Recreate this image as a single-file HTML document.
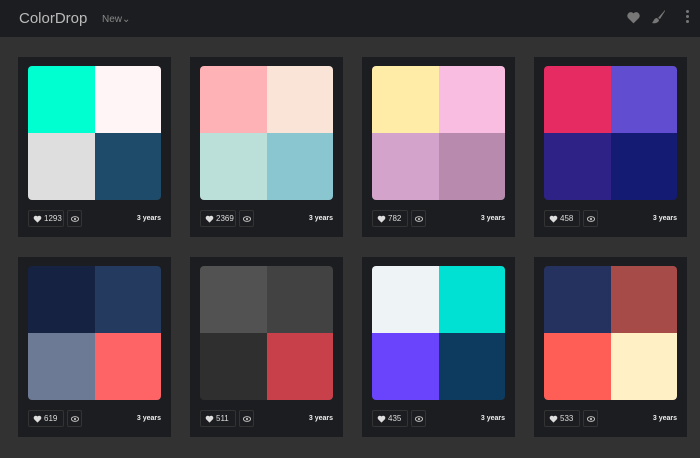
<!DOCTYPE html>
<html><head><style>
*{margin:0;padding:0;box-sizing:border-box}
body{width:700px;height:458px;overflow:hidden;background:#323232;font-family:"Liberation Sans",sans-serif}
.hdr{position:absolute;left:0;top:0;width:700px;height:37px;background:#1c1d20}
.logo{position:absolute;left:19px;top:10px;color:#bbb;font-size:15px}
.new{position:absolute;left:102px;top:14px;color:#888;font-size:10px}
.card{position:absolute;width:153px;height:180px;background:#1c1d20}
.pal{position:absolute;left:10px;top:9px;width:133px;height:134px;border-radius:4px;overflow:hidden;display:grid;grid-template-columns:1fr 1fr;grid-template-rows:1fr 1fr}
.b1{position:absolute;left:10px;top:153px;width:36px;height:17px;border:1px solid #333;border-radius:2px;color:#ddd;font-size:8px;line-height:15px;padding-left:15px}
.b1 svg{position:absolute;left:4px;top:4px}
.b2{position:absolute;left:49px;top:153px;width:15px;height:17px;border:1px solid #333;border-radius:2px}
.b2 svg{position:absolute;left:3px;top:5px}
.yr{position:absolute;right:10px;top:158px;color:#eee;font-size:7px;font-weight:bold}
</style></head><body>
<div class="hdr">
<div class="logo">ColorDrop</div>
<div class="new">New⌄</div>
<svg style="position:absolute;left:626px;top:11px" width="15" height="13" viewBox="0 0 24 22"><path d="M12 21 L3 12 A5.5 5.5 0 0 1 12 4 A5.5 5.5 0 0 1 21 12Z" fill="#777"/></svg>
<svg style="position:absolute;left:651px;top:9px" width="15" height="16" viewBox="0 0 15 16"><path d="M14 1 L7 9 L9 10 L14 2Z" fill="#777"/><path d="M6 9 C3 9 3 12 1 14 C5 15 8 13 8 11Z" fill="#777"/></svg>
<div style="position:absolute;left:686px;top:10px;width:3px;height:3px;border-radius:50%;background:#777;box-shadow:0 5px 0 #777,0 10px 0 #777"></div>
</div>
<div id="g"></div>
<script>
var d=[["#00ffd0","#fff5f6","#dedede","#1e4b6a","1293"],["#ffb2b6","#fae4d8","#bbe0da","#8ac6d0","2369"],["#ffeda7","#f8bde0","#d4a3cb","#b88aae","782"],["#e62a62","#614dcf","#2e2286","#131c72","458"],["#162242","#243b5f","#6c7a95","#fe6365","619"],["#525252","#424242","#2f2f2f","#c8414a","511"],["#eef3f6","#00e0d3","#6a44fc","#0c3b5f","435"],["#25325f","#a64b47","#fe5e56","#fff0c5","533"]];
var h="";d.forEach(function(c,i){var x=18+(i%4)*172,y=57+Math.floor(i/4)*200;
h+='<div class="card" style="left:'+x+'px;top:'+y+'px"><div class="pal">'+c.slice(0,4).map(function(k){return '<div style="background:'+k+'"></div>'}).join('')+'</div><div class="b1"><svg width="9" height="8" viewBox="0 0 24 22"><path d="M12 21 L3 12 A5.5 5.5 0 0 1 12 4 A5.5 5.5 0 0 1 21 12Z" fill="#ddd"/></svg>'+c[4]+'</div><div class="b2"><svg width="8" height="6" viewBox="0 0 8 6"><ellipse cx="4" cy="3" rx="3.6" ry="2.4" fill="none" stroke="#bbb" stroke-width="1"/><circle cx="4" cy="3" r="1.1" fill="#bbb"/></svg></div><div class="yr">3 years</div></div>';});
document.getElementById("g").innerHTML=h;
</script>
</body></html>
